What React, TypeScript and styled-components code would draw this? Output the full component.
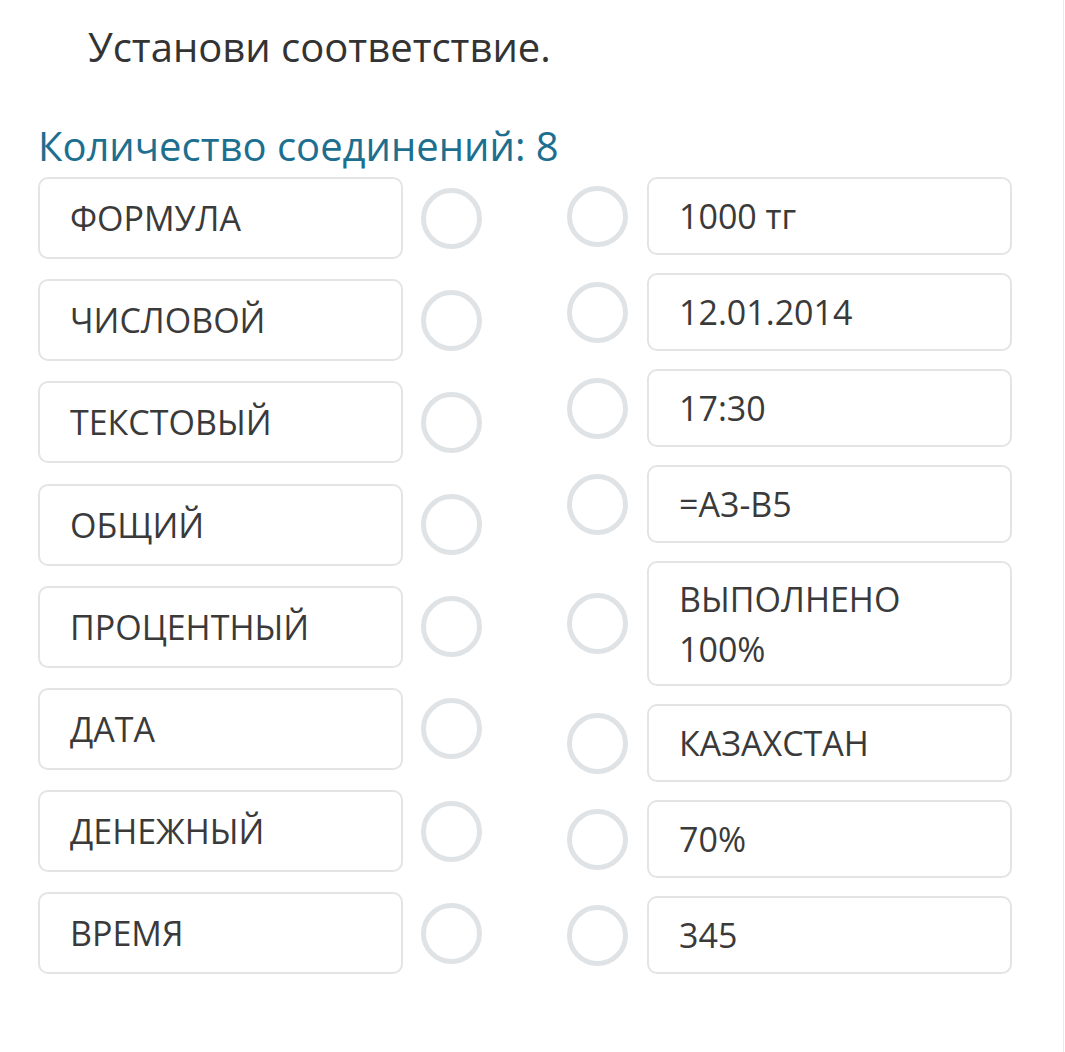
import React from "react";
import styled, { createGlobalStyle } from "styled-components";

const GlobalStyle = createGlobalStyle`
  html, body {
    margin: 0;
    padding: 0;
    background: #ffffff;
  }
  body {
    font-family: "Open Sans", "Noto Sans", sans-serif;
    color: #333333;
  }
`;

const Page = styled("div")`
  width: 1064px;
  height: 1052px;
  box-sizing: border-box;
  border-right: 1px solid #e9e9e9;
  padding: 20px 0 0 38px;
`;

const Title = styled("h1")`
  margin: 0 0 0 50px;
  font-size: 40px;
  font-weight: 400;
  line-height: 54px;
  color: #333333;
`;

const Counter = styled("div")`
  margin-top: 46px;
  font-size: 40px;
  line-height: 52px;
  color: #1d6f8f;
`;

const Board = styled("div")`
  display: flex;
  margin-top: 5px;
  gap: 85px;
`;

const Column = styled("div")<{ $gap: number }>`
  display: flex;
  flex-direction: column;
  gap: ${(p) => p.$gap}px;
`;

const Row = styled("div")`
  display: flex;
  align-items: center;
`;

const Card = styled("div")<{ $h: number }>`
  width: 365px;
  min-height: ${(p) => p.$h}px;
  box-sizing: border-box;
  display: flex;
  align-items: center;
  padding: 10.5px 28px 10.5px 30px;
  border: 2px solid #e2e4e6;
  border-radius: 10px;
  font-size: 34px;
  line-height: 50px;
  color: #3a3a3a;
`;

const Dot = styled("div")<{ $side: "left" | "right" }>`
  width: 61px;
  height: 61px;
  box-sizing: border-box;
  border: 5px solid #dfe3e6;
  border-radius: 50%;
  flex: none;
  margin-left: ${(p) => (p.$side === "left" ? "18px" : "0")};
  margin-right: ${(p) => (p.$side === "right" ? "19px" : "0")};
`;

const leftItems = [
  "ФОРМУЛА",
  "ЧИСЛОВОЙ",
  "ТЕКСТОВЫЙ",
  "ОБЩИЙ",
  "ПРОЦЕНТНЫЙ",
  "ДАТА",
  "ДЕНЕЖНЫЙ",
  "ВРЕМЯ",
];

const rightItems = [
  "1000 тг",
  "12.01.2014",
  "17:30",
  "=A3-B5",
  "ВЫПОЛНЕНО 100%",
  "КАЗАХСТАН",
  "70%",
  "345",
];

function App() {
  return (
    <>
      <GlobalStyle />
      <Page>
        <Title>Установи соответствие.</Title>
        <Counter>Количество соединений: 8</Counter>
        <Board>
          <Column $gap={20.2}>
            {leftItems.map((t) => (
              <Row key={t}>
                <Card $h={82}>{t}</Card>
                <Dot $side="left" />
              </Row>
            ))}
          </Column>
          <Column $gap={18}>
            {rightItems.map((t) => (
              <Row key={t}>
                <Dot $side="right" />
                <Card $h={78}>{t}</Card>
              </Row>
            ))}
          </Column>
        </Board>
      </Page>
    </>
  );
}

export default App;
